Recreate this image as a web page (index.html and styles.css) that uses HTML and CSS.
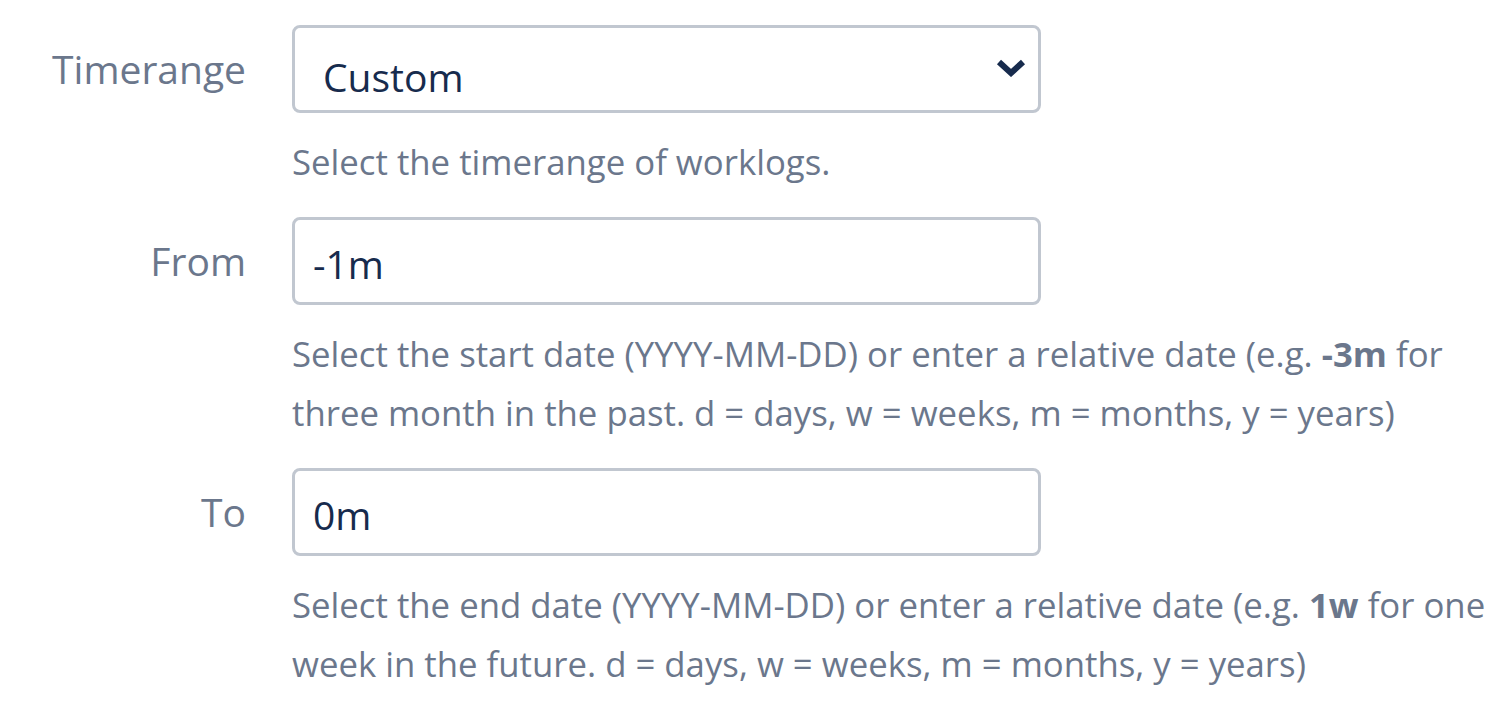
FILE: index.html
```html
<!DOCTYPE html>
<html>
<head>
<meta charset="utf-8">
<link rel="stylesheet" href="styles.css">
</head>
<body>
<form class="form">
  <div class="row">
    <label class="label">Timerange</label>
    <div class="field">
      <div class="select">
        <span class="select-value">Custom</span>
        <svg class="chevron" width="30" height="18" viewBox="0 0 30 18"><path d="M3 3 L15 14 L27 3" fill="none" stroke="#172b4d" stroke-width="6" stroke-linejoin="miter" stroke-linecap="butt"/></svg>
      </div>
      <div class="help">Select the timerange of worklogs.</div>
    </div>
  </div>
  <div class="row">
    <label class="label">From</label>
    <div class="field">
      <div class="input">-1m</div>
      <div class="help">Select the start date (YYYY-MM-DD) or enter a relative date (e.g. <b>-3m</b> for<br>three month in the past. d = days, w = weeks, m = months, y = years)</div>
    </div>
  </div>
  <div class="row">
    <label class="label">To</label>
    <div class="field">
      <div class="input">0m</div>
      <div class="help">Select the end date (YYYY-MM-DD) or enter a relative date (e.g. <b>1w</b> for one<br>week in the future. d = days, w = weeks, m = months, y = years)</div>
    </div>
  </div>
</form>
</body>
</html>
```

FILE: styles.css
```css
html, body {
  margin: 0;
  padding: 0;
  background: #fff;
}
body {
  font-family: "Open Sans", "Noto Sans", sans-serif;
  color: #172b4d;
}
.form {
  display: flex;
  flex-direction: column;
  padding-top: 25px;
}
.row {
  display: grid;
  grid-template-columns: 246px 749px;
  column-gap: 46px;
  margin-bottom: 26px;
}
.label {
  text-align: right;
  color: #6b778c;
  font-size: 39px;
  height: 88px;
  line-height: 88px;
}
.field {
  display: flex;
  flex-direction: column;
}
.select, .input {
  box-sizing: border-box;
  height: 88px;
  border: 3px solid #c1c7d0;
  border-radius: 8px;
  display: flex;
  align-items: center;
  font-size: 39px;
  color: #172b4d;
}
.select {
  padding: 14px 12px 0 28px;
  justify-content: space-between;
}
.select .chevron {
  margin-top: -16px;
}
.input {
  padding-left: 18px;
  padding-top: 4px;
}
.help {
  width: 1220px;
  margin-top: 19px;
  font-size: 34.75px;
  line-height: 59px;
  color: #6b778c;
}
.help b {
  font-weight: 700;
}
```
